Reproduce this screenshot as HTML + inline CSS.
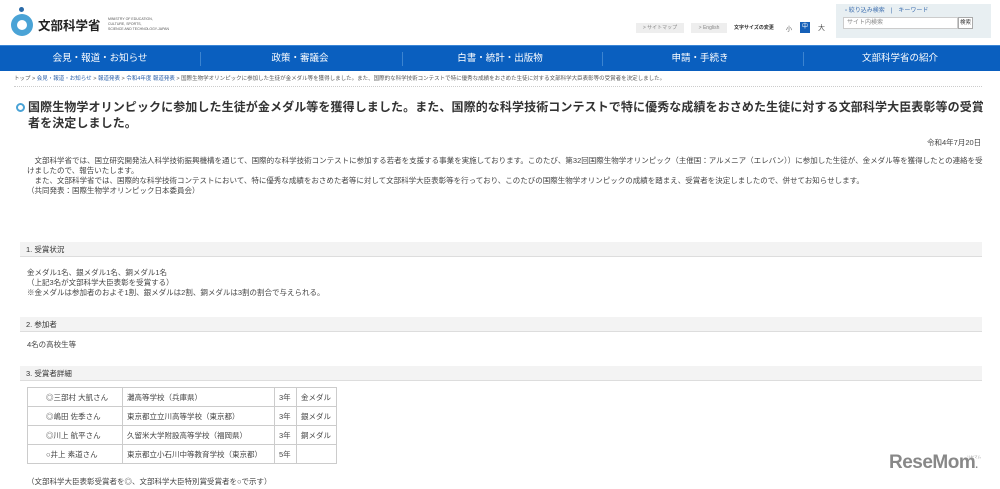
<!DOCTYPE html>
<html><head><meta charset="utf-8"><style>
*{margin:0;padding:0;box-sizing:border-box}
body{width:1000px;height:489px;overflow:hidden;background:#fff;font-family:"Liberation Sans","Noto Sans CJK JP",sans-serif;color:#333;position:relative}
.a{position:absolute;white-space:nowrap}
.nav{position:absolute;left:0;top:45px;width:1000px;height:26px;background:#0a5fbf;border-top:1px solid #3b86d6}
.nav .c{position:absolute;top:0;height:26px;line-height:25px;color:#fff;font-size:9.5px;text-align:center;width:200px}
.nav .sep{position:absolute;top:6px;width:1px;height:14px;background:#3c84d0}
.bar{position:absolute;left:20px;width:962px;height:15px;background:#f3f3f3;border-bottom:1px solid #ddd;font-size:7.5px;line-height:15px;padding-left:6px;color:#333}
.t{font-size:7.5px;color:#444;line-height:10px}
table{position:absolute;left:27px;top:387px;border-collapse:collapse;font-size:7.5px;color:#444}
td{border:1px solid #ccc;height:19px;padding:0 4px;white-space:nowrap}
</style></head><body>
<div class="a" style="left:11px;top:14px;width:22px;height:22px;border-radius:50%;background:#4aa3d6"></div>
<div class="a" style="left:17px;top:20px;width:10px;height:10px;border-radius:50%;background:#fff"></div>
<div class="a" style="left:19px;top:7px;width:5px;height:5px;border-radius:50%;background:#2a6aa8"></div>
<div class="a" style="left:38px;top:15px;font-size:12.5px;font-weight:bold;color:#222">文部科学省</div>
<div class="a" style="left:108px;top:17px;font-size:3.5px;line-height:5px;color:#555">MINISTRY OF EDUCATION,<br>CULTURE, SPORTS,<br>SCIENCE AND TECHNOLOGY-JAPAN</div>
<div class="a" style="left:636px;top:23px;width:48px;height:10px;background:#eee;font-size:5px;line-height:10px;color:#888;text-align:center">&gt; サイトマップ</div>
<div class="a" style="left:691px;top:23px;width:36px;height:10px;background:#eee;font-size:5px;line-height:10px;color:#888;text-align:center">&gt; English</div>
<div class="a" style="left:734px;top:24px;font-size:5px;font-weight:bold;color:#333">文字サイズの変更</div>
<div class="a" style="left:786px;top:24px;font-size:6px;color:#555">小</div>
<div class="a" style="left:800px;top:22px;width:10px;height:11px;background:#1560b8;color:#fff;font-size:6px;text-align:center;line-height:11px">中</div>
<div class="a" style="left:818px;top:23px;font-size:7px;color:#555">大</div>
<div class="a" style="left:836px;top:4px;width:155px;height:34px;background:#e8eff2"></div>
<div class="a" style="left:845px;top:5px;font-size:6px;color:#3e6fb0">▫ 絞り込み検索　|　キーワード</div>
<div class="a" style="left:843px;top:17px;width:115px;height:12px;background:#fff;border:1px solid #ccc;font-size:6px;color:#888;line-height:10px;padding-left:3px">サイト内検索</div>
<div class="a" style="left:958px;top:17px;width:15px;height:12px;background:#fff;border:1px solid #aaa;font-size:5.5px;line-height:10px;text-align:center">検索</div>
<div class="nav">
<div class="c" style="left:0">会見・報道・お知らせ</div><div class="sep" style="left:200px"></div>
<div class="c" style="left:200px">政策・審議会</div><div class="sep" style="left:402px"></div>
<div class="c" style="left:400px">白書・統計・出版物</div><div class="sep" style="left:602px"></div>
<div class="c" style="left:600px">申請・手続き</div><div class="sep" style="left:803px"></div>
<div class="c" style="left:800px">文部科学省の紹介</div>
</div>
<div class="a" style="left:14px;top:74px;font-size:5.5px;color:#555">トップ &gt; <span style="color:#2a5ea8">会見・報道・お知らせ</span> &gt; <span style="color:#2a5ea8">報道発表</span> &gt; <span style="color:#2a5ea8">令和4年度 報道発表</span> &gt; 国際生物学オリンピックに参加した生徒が金メダル等を獲得しました。また、国際的な科学技術コンテストで特に優秀な成績をおさめた生徒に対する文部科学大臣表彰等の受賞者を決定しました。</div>
<div class="a" style="left:14px;top:86px;width:968px;border-top:1px dotted #ccc"></div>
<div class="a" style="left:16px;top:103px;width:9px;height:9px;border-radius:50%;border:2.5px solid #4aa3d6"></div>
<div class="a" style="left:28px;top:99px;font-size:12px;letter-spacing:0.1px;font-weight:bold;color:#333;line-height:16px;white-space:normal;width:962px">国際生物学オリンピックに参加した生徒が金メダル等を獲得しました。また、国際的な科学技術コンテストで特に優秀な成績をおさめた生徒に対する文部科学大臣表彰等の受賞者を決定しました。</div>
<div class="a t" style="left:927px;top:138px">令和4年7月20日</div>
<div class="a t" style="left:27px;top:156px;white-space:normal;width:960px">　文部科学省では、国立研究開発法人科学技術振興機構を通じて、国際的な科学技術コンテストに参加する若者を支援する事業を実施しております。このたび、第32回国際生物学オリンピック（主催国：アルメニア（エレバン））に参加した生徒が、金メダル等を獲得したとの連絡を受けましたので、報告いたします。<br>　また、文部科学省では、国際的な科学技術コンテストにおいて、特に優秀な成績をおさめた者等に対して文部科学大臣表彰等を行っており、このたびの国際生物学オリンピックの成績を踏まえ、受賞者を決定しましたので、併せてお知らせします。<br>（共同発表：国際生物学オリンピック日本委員会）</div>
<div class="bar" style="top:242px">1. 受賞状況</div>
<div class="a t" style="left:27px;top:268px">金メダル1名、銀メダル1名、銅メダル1名<br>（上記3名が文部科学大臣表彰を受賞する）<br>※金メダルは参加者のおよそ1割、銀メダルは2割、銅メダルは3割の割合で与えられる。</div>
<div class="bar" style="top:317px">2. 参加者</div>
<div class="a t" style="left:27px;top:340px">4名の高校生等</div>
<div class="bar" style="top:366px">3. 受賞者詳細</div>
<table>
<tr><td style="width:95px;padding-left:18px">◎三部村 大凱さん</td><td style="width:152px">灘高等学校（兵庫県）</td><td style="width:22px">3年</td><td style="width:40px">金メダル</td></tr>
<tr><td style="padding-left:18px">◎嶋田 佐季さん</td><td>東京都立立川高等学校（東京都）</td><td>3年</td><td>銀メダル</td></tr>
<tr><td style="padding-left:18px">◎川上 航平さん</td><td>久留米大学附設高等学校（福岡県）</td><td>3年</td><td>銅メダル</td></tr>
<tr><td style="padding-left:18px">○井上 素道さん</td><td>東京都立小石川中等教育学校（東京都）</td><td>5年</td><td></td></tr>
</table>
<div class="a t" style="left:27px;top:477px">（文部科学大臣表彰受賞者を◎、文部科学大臣特別賞受賞者を○で示す）</div>
<div class="a" style="left:889px;top:452px;font-size:19px;font-weight:bold;color:#888;letter-spacing:-0.5px">ReseMom<span style="font-size:10px">.</span></div>
<div class="a" style="left:967px;top:455px;font-size:3.5px;color:#999">リセマム</div>
</body></html>
